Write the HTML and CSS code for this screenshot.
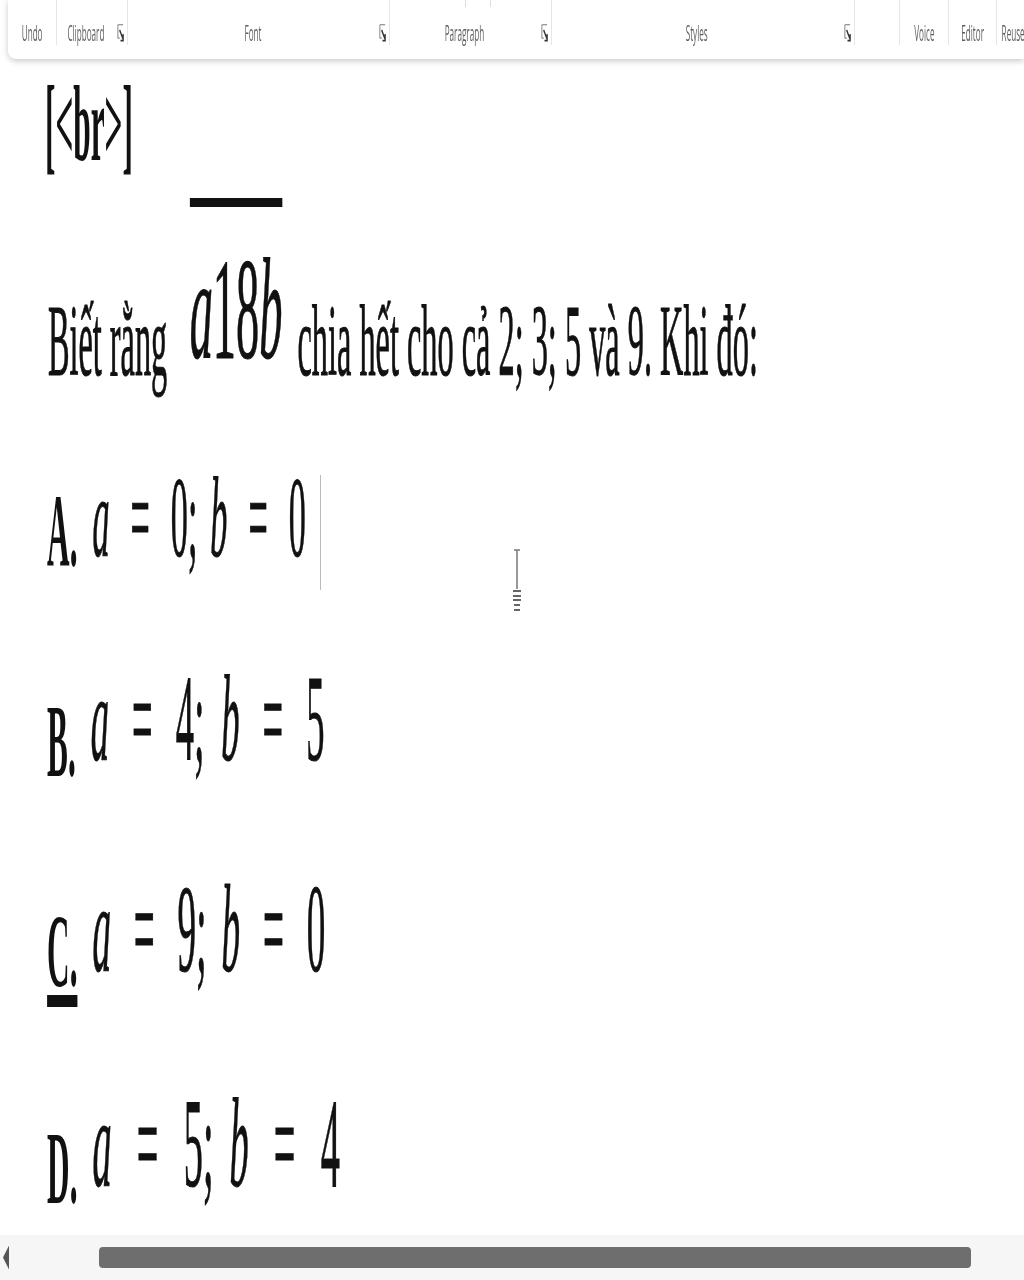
FILE: index.html
```html
<!DOCTYPE html>
<html lang="vi">
<head>
<meta charset="utf-8">
<title>Biết rằng a18b</title>
<link rel="stylesheet" href="styles.css">
</head>
<body>
<div class="page">
  <header class="ribbon">
    <div class="group g-undo"><span class="label">Undo</span></div>
    <div class="group g-clip launcher"><span class="label">Clipboard</span><svg class="launch" viewBox="0 0 8 18" preserveAspectRatio="none"><path d="M1 1.500H7M1 1.500V13M1 13H3" fill="none" stroke="#777" stroke-width="1"/><path d="M3 6L7 14M7 9.500V15H4" fill="none" stroke="#333" stroke-width="1.500"/></svg></div>
    <div class="group g-font launcher"><span class="label">Font</span><svg class="launch" viewBox="0 0 8 18" preserveAspectRatio="none"><path d="M1 1.500H7M1 1.500V13M1 13H3" fill="none" stroke="#777" stroke-width="1"/><path d="M3 6L7 14M7 9.500V15H4" fill="none" stroke="#333" stroke-width="1.500"/></svg></div>
    <div class="group g-para launcher"><span class="label">Paragraph</span><svg class="launch" viewBox="0 0 8 18" preserveAspectRatio="none"><path d="M1 1.500H7M1 1.500V13M1 13H3" fill="none" stroke="#777" stroke-width="1"/><path d="M3 6L7 14M7 9.500V15H4" fill="none" stroke="#333" stroke-width="1.500"/></svg></div>
    <div class="group g-styles launcher"><span class="label">Styles</span><svg class="launch" viewBox="0 0 8 18" preserveAspectRatio="none"><path d="M1 1.500H7M1 1.500V13M1 13H3" fill="none" stroke="#777" stroke-width="1"/><path d="M3 6L7 14M7 9.500V15H4" fill="none" stroke="#333" stroke-width="1.500"/></svg></div>
    <div class="group g-blank"></div>
    <div class="group g-voice"><span class="label">Voice</span></div>
    <div class="group g-editor"><span class="label">Editor</span></div>
    <div class="group g-reuse"><span class="label">Reuse</span></div>
  </header>

  <main class="doc">
    <div class="row row-br"><span class="br-text">[&lt;br&gt;]</span></div>
    <div class="row row-q">
      <span class="q-text">Biết rằng</span>
      <span class="overbar"><i>a</i>18<i>b</i></span>
      <span class="q-text">chia hết cho cả 2; 3; 5 và 9. Khi đó:</span>
    </div>
    <div class="row row-a">
      <b class="opt">A.</b>
      <span class="math"><i>a</i><span class="eq">=</span>0;<i class="b">b</i><span class="eq">=</span>0</span>
    </div>
    <div class="row row-b">
      <b class="opt">B.</b>
      <span class="math"><i>a</i><span class="eq">=</span>4;<i class="b">b</i><span class="eq">=</span>5</span>
    </div>
    <div class="row row-c">
      <b class="opt under">C.</b>
      <span class="math"><i>a</i><span class="eq">=</span>9;<i class="b">b</i><span class="eq">=</span>0</span>
    </div>
    <div class="row row-d">
      <b class="opt">D.</b>
      <span class="math"><i>a</i><span class="eq">=</span>5;<i class="b">b</i><span class="eq">=</span>4</span>
    </div>
    <span class="caret"></span>
    <svg class="ibeam" viewBox="0 0 12 64"><path d="M3 1H9M6 1V40" fill="none" stroke="#777" stroke-width="1.500"/><path d="M2 42H10M2 47H10M2 51H10M3 56H9M3 61H9" fill="none" stroke="#666" stroke-width="2"/></svg>
  </main>

  <footer class="scrollbar">
    <span class="arrow"></span>
    <span class="thumb"></span>
  </footer>
</div>
</body>
</html>
```
FILE: styles.css
```css
* { box-sizing: border-box; }
html, body { margin: 0; padding: 0; background: #fff; }
.page {
  width: 1024px;
  height: 1280px;
  overflow: hidden;
  display: flex;
  flex-direction: column;
  font-family: "Liberation Serif", serif;
  color: #111;
  filter: blur(0.6px);
}

/* ribbon */
.ribbon {
  flex: none;
  height: 59px;
  margin-left: 8px;
  display: flex;
  background: #fff;
  border-bottom-left-radius: 8px;
  box-shadow: 0 2px 6px rgba(0,0,0,.22);
  position: relative;
  z-index: 1;
}
.group {
  flex: none;
  height: 45px;
  display: flex;
  align-items: flex-end;
  justify-content: center;
  position: relative;
  border-right: 1px solid #e6e6e6;
}
.launcher { padding-right: 12px; }
.g-undo { width: 49px; }
.g-clip { width: 71px; }
.g-font { width: 262px; }
.g-para { width: 162px; }
.g-styles { width: 303px; }
.g-blank { width: 45px; }
.g-voice { width: 49px; }
.g-editor { width: 48px; }
.g-reuse { width: 30px; border-right: 0; padding-left: 2px; }
.g-para::before, .g-para::after {
  content: "";
  position: absolute;
  top: 0;
  width: 1px;
  height: 7px;
  background: #ddd;
}
.g-para::before { left: 75px; }
.g-para::after { left: 100px; }
.label {
  display: block;
  font-family: "Open Sans", sans-serif;
  font-size: 22px;
  line-height: 26px;
  color: #5e5e5e;
  white-space: nowrap;
  transform: scaleX(.37);
}
.launch {
  position: absolute;
  right: 3px;
  top: 23px;
  width: 7px;
  height: 21px;
}

/* document */
.doc {
  flex: 1;
  min-height: 0;
  padding: 21px 0 0 45px;
  position: relative;
}
.row {
  height: 160px;
  line-height: 160px;
  font-size: 0;
  white-space: nowrap;
  transform-origin: left top;
  transform: scaleX(.3);
  width: 333%;
  padding-left: 7px;
}
.row span, .row b, .row i { line-height: 0; }
.row-br { transform: scaleX(.29); padding-left: 0; }
.br-text { font-size: 108px; font-weight: 700; }
.row-q { margin-top: 55px; transform: scaleX(.32); padding-left: 9px; }
.q-text { font-size: 101px; -webkit-text-stroke: 1px #111; }
.overbar {
  position: relative;
  font-size: 145px;
  vertical-align: 17px;
  margin: 0 47px 0 70px;
  -webkit-text-stroke: 1px #111;
}
.overbar::before {
  content: "";
  position: absolute;
  left: 0;
  right: 0;
  top: -31px;
  height: 9px;
  background: #111;
}
.row-a { --size: 114px; --eq: 70px; --semi: 43px; --lift: 10px; margin-top: 31px; }
.row-b { --size: 122px; --eq: 77px; --semi: 56px; --lift: 16px; margin-top: 50px; }
.row-c { --size: 124px; --eq: 76px; --semi: 50px; --lift: 15px; margin-top: 50px; }
.row-d { --size: 128px; --eq: 84px; --semi: 53px; --lift: 17px; margin-top: 57px; }
.opt { font-size: 104px; }
.under {
  text-decoration: underline;
  text-decoration-thickness: 12px;
  text-underline-offset: 9px;
  text-decoration-skip-ink: none;
}
.math {
  font-size: var(--size);
  vertical-align: var(--lift);
  margin-left: 50px;
  -webkit-text-stroke: 1px #111;
}
.eq { margin: 0 var(--eq); }
.math i.b { margin-left: var(--semi); }
.caret {
  position: absolute;
  left: 320px;
  top: 416px;
  width: 1px;
  height: 115px;
  background: #bbb;
}
.ibeam {
  position: absolute;
  left: 511px;
  top: 490px;
  width: 12px;
  height: 64px;
}

/* scrollbar */
.scrollbar {
  flex: none;
  height: 45px;
  background: #f6f6f6;
  display: flex;
  align-items: center;
  padding: 0 53px 0 3px;
}
.arrow {
  width: 6px;
  height: 24px;
  background: #555;
  clip-path: polygon(100% 0, 100% 100%, 0 50%);
}
.thumb {
  margin-left: 90px;
  flex: 1;
  height: 21px;
  background: #6e6e6e;
  border-radius: 4px;
}
```
